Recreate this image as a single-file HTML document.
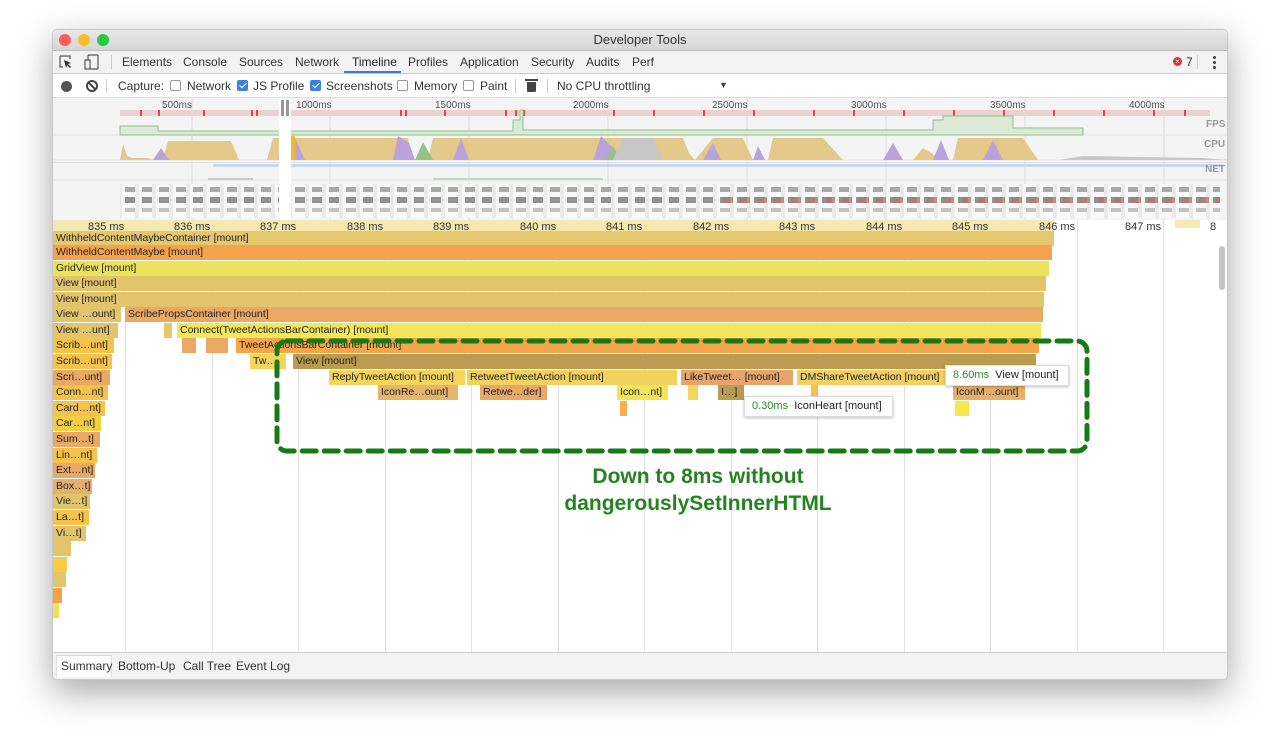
<!DOCTYPE html>
<html><head><meta charset="utf-8"><style>
*{margin:0;padding:0;box-sizing:border-box}
body{width:1280px;height:755px;background:#fff;position:relative;overflow:hidden;font-family:"Liberation Sans",sans-serif;font-size:11px;color:#222}
.a{position:absolute}
.win{left:52px;top:29px;width:1176px;height:651px;border-radius:5px;box-shadow:0 12px 35px rgba(0,0,0,.35);overflow:hidden;background:#fff;border:1px solid #c8c8c8}
.b{position:absolute;height:15px;line-height:15px;padding-left:3px;white-space:nowrap;overflow:hidden;font-size:10.5px;color:#222}
.t{position:absolute;font-size:12px;color:#333;top:5px}
.g{position:absolute;top:220px;width:1px;height:432px;background:#e0e0e0}
.tl{position:absolute;top:221px;font-size:11px;color:#333;z-index:2}
.cb{position:absolute;top:80px;width:11px;height:11px;border:1px solid #999;border-radius:2px;background:#fff}
.cb.on{background:#3b82e0;border-color:#3b82e0}
.cb.on:after{content:"";position:absolute;left:3px;top:0px;width:3px;height:6px;border:solid #fff;border-width:0 1.5px 1.5px 0;transform:rotate(45deg)}
.ct{position:absolute;top:79px;font-size:12px;color:#333}
.ss{position:absolute;top:184px;height:34px;background:
repeating-linear-gradient(90deg,transparent 0 2px,#f8f8f8 2px 15px,transparent 15px 17px),
linear-gradient(#eaeaea,#eaeaea)}
.ssi{position:absolute;top:188px;height:28px;background:
repeating-linear-gradient(90deg,transparent 0 4px,rgba(0,0,0,0) 4px 13px,transparent 13px 17px)}
</style></head><body>
<div class="a win"></div>
<div class="a" style="left:53px;top:30px;width:1174px;height:21px;background:linear-gradient(#e8e8e8,#d6d6d6);border-bottom:1px solid #c0c0c0;border-radius:5px 5px 0 0"></div>
<div class="a" style="left:59px;top:34px;width:12px;height:12px;border-radius:50%;background:#fc5f57"></div>
<div class="a" style="left:78px;top:34px;width:12px;height:12px;border-radius:50%;background:#fdbc2e"></div>
<div class="a" style="left:97px;top:34px;width:12px;height:12px;border-radius:50%;background:#28c840"></div>
<div class="a" style="left:0;width:1280px;top:32px;text-align:center;font-size:13px;color:#333">Developer Tools</div>
<div class="a" style="left:53px;top:51px;width:1174px;height:23px;background:#f3f3f3;border-bottom:1px solid #ccc"></div>
<svg class="a" style="left:58px;top:54px" width="50" height="16"><path d="M2 2h10v3M2 2v11h3" stroke="#555" fill="none" stroke-width="1.2"/><path d="M6 6l7 3-3 1 3 3-1 1-3-3-1 3z" fill="#333"/><rect x="30" y="1" width="10" height="14" rx="1" stroke="#555" fill="none" stroke-width="1.2"/><rect x="27" y="6" width="5" height="9" stroke="#555" fill="#f3f3f3" stroke-width="1.2"/></svg>
<div class="a" style="left:111px;top:55px;width:1px;height:14px;background:#ccc"></div>
<div class="t" style="left:122px;top:55px">Elements</div>
<div class="t" style="left:183px;top:55px">Console</div>
<div class="t" style="left:239px;top:55px">Sources</div>
<div class="t" style="left:295px;top:55px">Network</div>
<div class="t" style="left:352px;top:55px;color:#222">Timeline</div>
<div class="a" style="left:344px;top:71px;width:57px;height:2px;background:#3b7ae0"></div>
<div class="t" style="left:408px;top:55px">Profiles</div>
<div class="t" style="left:460px;top:55px">Application</div>
<div class="t" style="left:531px;top:55px">Security</div>
<div class="t" style="left:586px;top:55px">Audits</div>
<div class="t" style="left:632px;top:55px">Perf</div>
<div class="a" style="left:1173px;top:57px;width:9px;height:9px;border-radius:50%;background:#e0323b;color:#fff;font-size:8px;line-height:9px;text-align:center">×</div>
<div class="t" style="left:1186px;top:55px">7</div>
<div class="a" style="left:1197px;top:55px;width:1px;height:14px;background:#ccc"></div>
<div class="a" style="left:1213px;top:56px;width:3px;height:3px;border-radius:50%;background:#444;box-shadow:0 5px 0 #444,0 10px 0 #444"></div>
<div class="a" style="left:53px;top:74px;width:1174px;height:24px;background:#fff;border-bottom:1px solid #ddd"></div>
<div class="a" style="left:61px;top:81px;width:11px;height:11px;border-radius:50%;background:#555"></div>
<div class="a" style="left:86px;top:80px;width:12px;height:12px;border-radius:50%;border:2px solid #444"></div>
<div class="a" style="left:87px;top:85px;width:10px;height:2px;background:#444;transform:rotate(45deg)"></div>
<div class="a" style="left:106px;top:79px;width:1px;height:14px;background:#ccc"></div>
<div class="ct" style="left:118px">Capture:</div>
<div class="cb" style="left:170px"></div><div class="ct" style="left:187px">Network</div>
<div class="cb on" style="left:237px"></div><div class="ct" style="left:253px">JS Profile</div>
<div class="cb on" style="left:310px"></div><div class="ct" style="left:326px">Screenshots</div>
<div class="cb" style="left:397px"></div><div class="ct" style="left:414px">Memory</div>
<div class="cb" style="left:463px"></div><div class="ct" style="left:480px">Paint</div>
<div class="a" style="left:515px;top:79px;width:1px;height:14px;background:#ccc"></div>
<div class="a" style="left:527px;top:82px;width:9px;height:10px;background:#444;border-radius:0 0 1px 1px"></div>
<div class="a" style="left:525px;top:79px;width:13px;height:2px;background:#444"></div>
<div class="a" style="left:547px;top:79px;width:1px;height:14px;background:#ccc"></div>
<div class="ct" style="left:557px">No CPU throttling</div>
<div class="a" style="left:719px;top:80px;font-size:9px;color:#444">▼</div>
<div class="a" style="left:53px;top:98px;width:1174px;height:122px;background:#f4f4f4"></div>
<svg class="a" style="left:53px;top:98px" width="1174" height="122">
<g stroke="#ddd"><line x1="139" y1="0" x2="139" y2="122"/><line x1="277" y1="0" x2="277" y2="122"/><line x1="416" y1="0" x2="416" y2="122"/><line x1="555" y1="0" x2="555" y2="122"/><line x1="694" y1="0" x2="694" y2="122"/><line x1="833" y1="0" x2="833" y2="122"/><line x1="972" y1="0" x2="972" y2="122"/><line x1="1111" y1="0" x2="1111" y2="122"/><line x1="0" y1="37" x2="1174" y2="37" stroke="#e6e6e6"/><line x1="0" y1="62" x2="1174" y2="62" stroke="#e6e6e6"/><line x1="0" y1="82" x2="1174" y2="82" stroke="#e6e6e6"/></g>
<rect x="67" y="12" width="1090" height="6" fill="#ecd0d2"/>
<g fill="#e04848"><rect x="87" y="12" width="2" height="6"/><rect x="105" y="12" width="2" height="6"/><rect x="150" y="12" width="2" height="6"/><rect x="198" y="12" width="2" height="6"/><rect x="203" y="12" width="2" height="6"/><rect x="347" y="12" width="2" height="6"/><rect x="352" y="12" width="2" height="6"/><rect x="391" y="12" width="2" height="6"/><rect x="452" y="12" width="2" height="6"/><rect x="462" y="12" width="2" height="6"/><rect x="470" y="12" width="2" height="6"/><rect x="560" y="12" width="2" height="6"/><rect x="600" y="12" width="2" height="6"/><rect x="650" y="12" width="2" height="6"/><rect x="700" y="12" width="2" height="6"/><rect x="760" y="12" width="2" height="6"/><rect x="800" y="12" width="2" height="6"/><rect x="850" y="12" width="2" height="6"/><rect x="900" y="12" width="2" height="6"/><rect x="950" y="12" width="2" height="6"/><rect x="1000" y="12" width="2" height="6"/><rect x="1050" y="12" width="2" height="6"/><rect x="1100" y="12" width="2" height="6"/><rect x="1131" y="12" width="2" height="6"/></g>
<path d="M67 37V28H105V33H460V22H467V12H470V32H880V22H890V18H960V30H1030V37Z" fill="#dbead6" stroke="#8cc48a"/>
<path d="M67 62L70 46L74 58L80 60L95 60L100 62L110 60L115 43L178 43L186 62L214 62L220 40L355 40L360 62L375 62L380 40L630 40L636 55L642 62L660 40L690 40L700 62L715 62L720 40L770 40L790 62L860 62L870 50L890 62L900 62L905 40L970 40L985 62Z" fill="#e5c98a"/>
<path d="M100 62L108 50L116 62ZM225 62L232 40L242 40L252 62ZM340 62L345 38L356 45L362 62ZM400 62L408 40L416 62ZM540 62L548 38L560 50L565 62ZM650 62L660 45L668 62ZM700 62L705 48L712 62ZM830 62L840 45L850 62ZM880 62L888 42L896 62ZM930 62L940 42L950 62Z" fill="#b9a3da"/>
<path d="M362 62L370 44L380 62ZM552 62L560 48L568 62Z" fill="#97c08a"/>
<path d="M560 62L570 40L600 40L610 62ZM1005 62L1030 58L1150 60L1174 62Z" fill="#c8c8c8"/>
<rect x="232" y="38" width="10" height="24" fill="#f0b830"/>
<rect x="0" y="64" width="1174" height="1" fill="#e0e0e0"/>
<rect x="160" y="66" width="1010" height="3" fill="#cdd9ea"/>
<rect x="155" y="80" width="45" height="2" fill="#c8c8c8"/><rect x="380" y="80" width="170" height="2" fill="#c8d4c4"/>
</svg>
<div class="ss" style="left:120px;width:1100px"></div>
<div class="a" style="left:122px;top:187px;width:1098px;height:5px;background:repeating-linear-gradient(90deg,transparent 0 3px,#888 3px 13px,transparent 13px 17px);opacity:.7"></div>
<div class="a" style="left:122px;top:197px;width:1098px;height:6px;background:repeating-linear-gradient(90deg,transparent 0 3px,#777 3px 13px,transparent 13px 17px);opacity:.8"></div>
<div class="a" style="left:720px;top:197px;width:500px;height:6px;background:repeating-linear-gradient(90deg,transparent 0 3px,#b07878 3px 13px,transparent 13px 17px);opacity:.8"></div>
<div class="a" style="left:122px;top:208px;width:1098px;height:4px;background:repeating-linear-gradient(90deg,transparent 0 3px,#aaa 3px 13px,transparent 13px 17px);opacity:.7"></div>
<div class="a" style="left:279px;top:98px;width:12px;height:122px;background:#fff"></div>
<div class="a" style="left:281px;top:100px;width:3px;height:16px;background:#999"></div>
<div class="a" style="left:286px;top:100px;width:3px;height:16px;background:#999"></div>
<div class="a" style="left:162px;top:100px;font-size:10px;color:#555">500ms</div>
<div class="a" style="left:296px;top:100px;font-size:10px;color:#555">1000ms</div>
<div class="a" style="left:435px;top:100px;font-size:10px;color:#555">1500ms</div>
<div class="a" style="left:573px;top:100px;font-size:10px;color:#555">2000ms</div>
<div class="a" style="left:712px;top:100px;font-size:10px;color:#555">2500ms</div>
<div class="a" style="left:851px;top:100px;font-size:10px;color:#555">3000ms</div>
<div class="a" style="left:990px;top:100px;font-size:10px;color:#555">3500ms</div>
<div class="a" style="left:1129px;top:100px;font-size:10px;color:#555">4000ms</div>
<div class="a" style="left:1206px;top:119px;font-size:10px;font-weight:bold;color:#999">FPS</div>
<div class="a" style="left:1204px;top:139px;font-size:10px;font-weight:bold;color:#999">CPU</div>
<div class="a" style="left:1205px;top:164px;font-size:10px;font-weight:bold;color:#999">NET</div>
<div class="g" style="left:125px"></div><div class="g" style="left:212px"></div><div class="g" style="left:298px"></div><div class="g" style="left:385px"></div><div class="g" style="left:471px"></div><div class="g" style="left:558px"></div><div class="g" style="left:644px"></div><div class="g" style="left:731px"></div><div class="g" style="left:817px"></div><div class="g" style="left:904px"></div><div class="g" style="left:990px"></div><div class="g" style="left:1077px"></div><div class="g" style="left:1163px"></div>
<div class="a" style="left:53px;top:220px;width:1001px;height:12px;background:#f5e8b0"></div>
<div class="a" style="left:1175px;top:220px;width:25px;height:8px;background:#f5e8b0"></div>
<div class="b" style="left:53px;top:231px;width:1001px;background:#e4c870;padding-top:0">WithheldContentMaybeContainer [mount]</div>
<div class="tl" style="left:88px">835 ms</div><div class="tl" style="left:174px">836 ms</div><div class="tl" style="left:260px">837 ms</div><div class="tl" style="left:347px">838 ms</div><div class="tl" style="left:433px">839 ms</div><div class="tl" style="left:520px">840 ms</div><div class="tl" style="left:606px">841 ms</div><div class="tl" style="left:693px">842 ms</div><div class="tl" style="left:779px">843 ms</div><div class="tl" style="left:866px">844 ms</div><div class="tl" style="left:952px">845 ms</div><div class="tl" style="left:1039px">846 ms</div><div class="tl" style="left:1125px">847 ms</div><div class="tl" style="left:1210px">8</div>
<div class="b" style="left:53px;top:245px;width:999px;background:#f5a24c">WithheldContentMaybe [mount]</div>
<div class="b" style="left:53px;top:261px;width:996px;background:#ede25c">GridView [mount]</div>
<div class="b" style="left:53px;top:276px;width:993px;background:#e2c46c">View [mount]</div>
<div class="b" style="left:53px;top:292px;width:991px;background:#e2c46c">View [mount]</div>
<div class="b" style="left:53px;top:307px;width:68px;background:#e2c46c">View …ount]</div>
<div class="b" style="left:125px;top:307px;width:918px;background:#e9a863">ScribePropsContainer [mount]</div>
<div class="b" style="left:53px;top:323px;width:65px;background:#e2c46c">View …unt]</div>
<div class="b" style="left:164px;top:323px;width:8px;background:#e9c668"></div>
<div class="b" style="left:177px;top:323px;width:864px;background:#f2e65a">Connect(TweetActionsBarContainer) [mount]</div>
<div class="b" style="left:53px;top:338px;width:61px;background:#f5c34c">Scrib…unt]</div>
<div class="b" style="left:182px;top:338px;width:14px;background:#e9a863"></div>
<div class="b" style="left:206px;top:338px;width:22px;background:#e9a863"></div>
<div class="b" style="left:236px;top:338px;width:803px;background:#f5a54a">TweetActionsBarContainer [mount]</div>
<div class="b" style="left:53px;top:354px;width:59px;background:#f5c34c">Scrib…unt]</div>
<div class="b" style="left:250px;top:354px;width:36px;background:#f5d55c">Tw…</div>
<div class="b" style="left:293px;top:354px;width:743px;background:#b99c50">View [mount]</div>
<div class="b" style="left:53px;top:370px;width:57px;background:#e9a863">Scri…unt]</div>
<div class="b" style="left:329px;top:370px;width:136px;background:#f5d55c">ReplyTweetAction [mount]</div>
<div class="b" style="left:467px;top:370px;width:210px;background:#f2d25e">RetweetTweetAction [mount]</div>
<div class="b" style="left:681px;top:370px;width:112px;background:#e5a56c">LikeTweet… [mount]</div>
<div class="b" style="left:797px;top:370px;width:152px;background:#f2d066">DMShareTweetAction [mount]</div>
<div class="b" style="left:53px;top:385px;width:55px;background:#f5c34c">Conn…nt]</div>
<div class="b" style="left:378px;top:385px;width:80px;background:#e5b56c">IconRe…ount]</div>
<div class="b" style="left:480px;top:385px;width:67px;background:#e9a86a">Retwe…der]</div>
<div class="b" style="left:617px;top:385px;width:51px;background:#f2e458">Icon…nt]</div>
<div class="b" style="left:688px;top:385px;width:10px;background:#f5d55c"></div>
<div class="b" style="left:718px;top:385px;width:26px;background:#b99c50">I…]</div>
<div class="b" style="left:811px;top:385px;width:7px;background:#f5c34c"></div>
<div class="b" style="left:953px;top:385px;width:72px;background:#e5b06c">IconM…ount]</div>
<div class="b" style="left:53px;top:401px;width:52px;background:#f5c34c">Card…nt]</div>
<div class="b" style="left:620px;top:401px;width:7px;background:#f5b04c"></div>
<div class="b" style="left:955px;top:401px;width:14px;background:#f5e84a"></div>
<div class="b" style="left:53px;top:416px;width:48px;background:#f5cd44">Car…nt]</div>
<div class="b" style="left:53px;top:432px;width:47px;background:#e9a863">Sum…t]</div>
<div class="b" style="left:53px;top:448px;width:44px;background:#f5c34c">Lin…nt]</div>
<div class="b" style="left:53px;top:463px;width:42px;background:#e9a863">Ext…nt]</div>
<div class="b" style="left:53px;top:479px;width:39px;background:#e5b06c">Box…t]</div>
<div class="b" style="left:53px;top:494px;width:37px;background:#e2c46c">Vie…t]</div>
<div class="b" style="left:53px;top:510px;width:36px;background:#f5c34c">La…t]</div>
<div class="b" style="left:53px;top:526px;width:33px;background:#e2c46c">Vi…t]</div>
<div class="b" style="left:53px;top:541px;width:18px;background:#e2c46c"></div>
<div class="b" style="left:53px;top:557px;width:14px;background:#f5cd44"></div>
<div class="b" style="left:53px;top:572px;width:13px;background:#e2c46c"></div>
<div class="b" style="left:53px;top:588px;width:9px;background:#f5a04a"></div>
<div class="b" style="left:53px;top:603px;width:6px;background:#ede25c"></div>
<div class="a" style="left:1219px;top:246px;width:6px;height:44px;border-radius:3px;background:#c4c4c4"></div>
<div class="a" style="left:945px;top:365px;width:124px;height:21px;background:#fff;border:1px solid #ddd;box-shadow:0 1px 3px rgba(0,0,0,.25);font-size:11px;line-height:19px;padding-left:7px;white-space:nowrap"><span style="color:#2a8a2a">8.60ms</span>&nbsp; View [mount]</div>
<div class="a" style="left:744px;top:396px;width:149px;height:21px;background:#fff;border:1px solid #ddd;box-shadow:0 1px 3px rgba(0,0,0,.25);font-size:11px;line-height:19px;padding-left:7px;white-space:nowrap"><span style="color:#2a8a2a">0.30ms</span>&nbsp; IconHeart [mount]</div>
<svg class="a" style="left:270px;top:335px" width="830" height="125"><rect x="7" y="6" width="810" height="110" rx="10" fill="none" stroke="#167a16" stroke-width="5" stroke-dasharray="14 8" stroke-linecap="round"/></svg>
<div class="a" style="left:498px;top:463px;width:400px;text-align:center;font-size:21px;font-weight:bold;color:#258321;line-height:27px">Down to 8ms without<br>dangerouslySetInnerHTML</div>
<div class="a" style="left:53px;top:652px;width:1174px;height:27px;background:#f3f3f3;border-top:1px solid #ccc;border-radius:0 0 5px 5px"></div>
<div class="a" style="left:56px;top:655px;width:56px;height:22px;background:#fff;border:1px solid #ddd;border-bottom:none"></div>
<div class="t" style="left:61px;top:659px">Summary</div>
<div class="t" style="left:118px;top:659px">Bottom-Up</div>
<div class="t" style="left:183px;top:659px">Call Tree</div>
<div class="t" style="left:236px;top:659px">Event Log</div>
</body></html>
